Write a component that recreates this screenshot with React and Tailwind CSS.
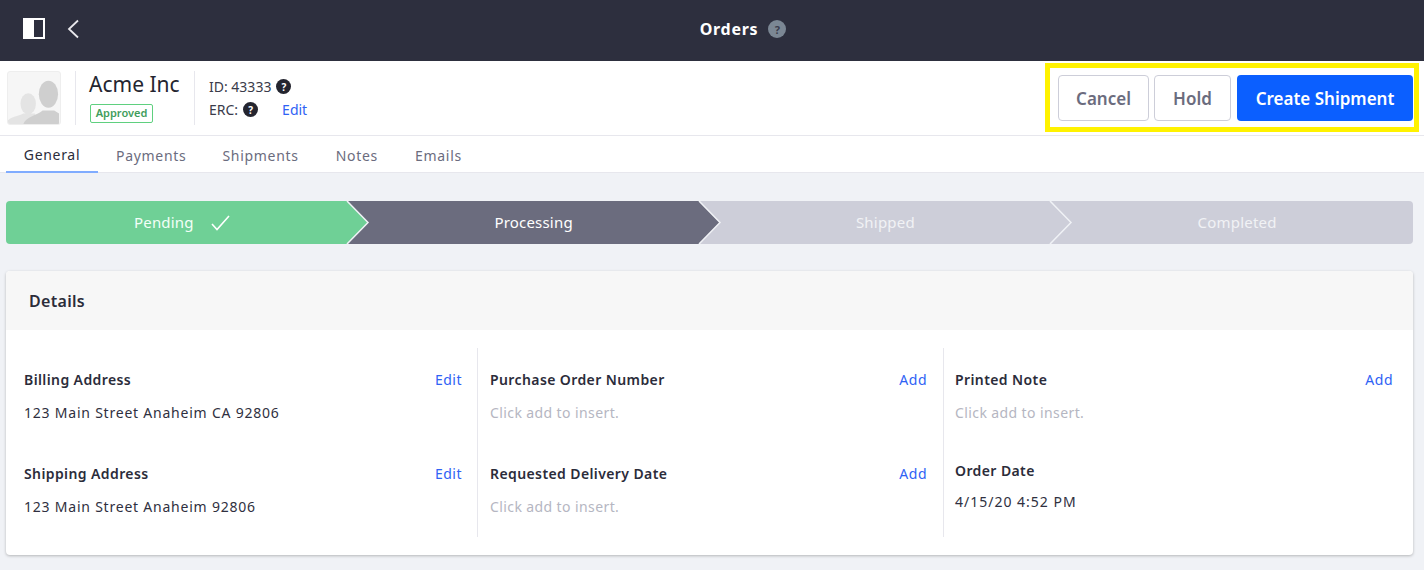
const font = { fontFamily: '"Noto Sans", sans-serif' };

function Help({ className = "bg-[#24252f] text-white w-[15px] h-[15px] text-[10px]" }) {
  return (
    <span className={`inline-flex items-center justify-center rounded-full font-bold leading-none tracking-normal ${className}`}>?</span>
  );
}

function Chevron({ own, next }) {
  return (
    <svg width="24" height="43" viewBox="0 0 24 43" className="absolute top-0 -right-[12px] z-10">
      <rect width="24" height="43" fill={next} />
      <polygon points="0,0 1,0 22,21.5 1,43 0,43" fill={own} />
      <polyline points="1,0 22,21.5 1,43" fill="none" stroke="#f0f2f6" strokeWidth="1.5" />
    </svg>
  );
}

function Step({ label, bg, next, check, rounded, textClass }) {
  return (
    <div className={`relative flex-1 h-full flex items-center justify-center ${rounded} ${textClass}`} style={{ backgroundColor: bg }}>
      <span className="text-[15px] tracking-[0.2px]">{label}</span>
      {check && (
        <svg width="19" height="16" viewBox="0 0 19 16" className="ml-[17px]" fill="none" stroke="#ffffff" strokeWidth="1.6">
          <path d="M1 9 L6 14.5 L18 1" />
        </svg>
      )}
      {next && <Chevron own={bg} next={next} />}
    </div>
  );
}

function Field({ label, action, value, muted, valueClass = "tracking-[0.4px]", className = "" }) {
  return (
    <div className={className}>
      <div className="flex items-center justify-between h-[22px]">
        <span className="text-[14px] font-semibold tracking-[0.4px] text-[#2b2c3a]">{label}</span>
        {action && <a className="text-[14px] tracking-[0.5px] text-[#2f62f5]">{action}</a>}
      </div>
      <div className={`mt-[12px] h-[22px] leading-[22px] text-[14px] ${valueClass} ${muted ? "text-[#b5b6c2]" : "text-[#2f3040]"}`}>{value}</div>
    </div>
  );
}

export default function App() {
  return (
    <div style={font} className="w-[1424px] h-[570px] overflow-hidden bg-[#f0f2f6] flex flex-col">
      <header className="relative h-[61px] shrink-0 bg-[#2d2f3e] flex items-center justify-center pl-[62px] pb-[3px]">
        <div className="absolute left-[23px] top-[18px] flex items-center gap-[22px]">
          <div className="w-[22px] h-[21px] border-2 border-white flex">
            <div className="w-[9px] bg-white" />
          </div>
          <svg width="12" height="20" viewBox="0 0 12 20" fill="none" stroke="#e8e8ec" strokeWidth="1.8">
            <path d="M11 1.5 L2 10 L11 18.5" />
          </svg>
        </div>
        <span className="text-[16px] font-bold tracking-[0.7px] text-white">Orders</span>
        <Help className="ml-[10px] w-[18px] h-[18px] text-[11px] bg-[#7b8794] text-[#3a3d4c]" />
      </header>

      <section className="h-[74px] shrink-0 bg-white flex items-center pl-[7px] pr-[5px]">
        <div className="w-[54px] h-[54px] rounded-[3px] bg-[#f6f6f6] border border-[#eeeeee] overflow-hidden">
          <svg viewBox="0 0 54 54" width="52" height="52">
            <ellipse cx="21" cy="33" rx="8" ry="11" fill="#e4e4e4" />
            <path d="M0 54 L0 50 C4 46 10 46 16 43 L28 43 L30 54 Z" fill="#e4e4e4" />
            <ellipse cx="42" cy="23" rx="10" ry="14" fill="#cfcfcf" />
            <path d="M16 54 C18 47 30 45 36 40 L48 40 L53 43 L53 54 Z" fill="#cfcfcf" />
          </svg>
        </div>
        <div className="ml-[14px] w-px h-[54px] bg-[#e7e7ed]" />
        <div className="ml-[13px] w-[105px] flex flex-col items-start">
          <span className="text-[21px] leading-[28px] -mt-[4px] text-[#24252f]">Acme Inc</span>
          <span className="ml-px mt-[6px] h-[19px] w-[63px] flex items-center justify-center border border-[#5fd07f] rounded-[2px] text-[11px] font-semibold text-[#3f9d5c]">Approved</span>
        </div>
        <div className="w-px h-[54px] bg-[#e7e7ed]" />
        <div className="ml-[14px] flex flex-col text-[14px] text-[#3a3b4a] leading-[23px]">
          <div className="flex items-center gap-[5px]">ID: 43333 <Help /></div>
          <div className="flex items-center">
            ERC: <Help className="bg-[#24252f] text-white w-[15px] h-[15px] text-[10px] ml-[5px]" />
            <a className="ml-[24px] text-[#2f62f5]">Edit</a>
          </div>
        </div>
        <div className="ml-auto self-start mt-[2px] h-[69px] w-[374px] border-[5px] border-[#fff200] flex items-center pl-[8px] gap-[5px]">
          <button className="w-[91px] h-[46px] pt-[3px] rounded-[4px] border border-[#cdced9] bg-white text-[17px] font-semibold text-[#6b6c7e]">Cancel</button>
          <button className="w-[77px] h-[46px] pt-[3px] rounded-[4px] border border-[#cdced9] bg-white text-[17px] font-semibold text-[#6b6c7e]">Hold</button>
          <button className="ml-px w-[176px] h-[46px] pt-[3px] rounded-[4px] bg-[#0b5fff] text-[17px] font-semibold text-white">Create Shipment</button>
        </div>
      </section>

      <nav className="h-[38px] shrink-0 bg-white border-y border-[#e7e7ed] pl-[6px] flex items-stretch text-[14px] tracking-[0.7px] text-[#6b6c7e]">
        <div className="w-[92px] pt-[2px] flex items-center justify-center text-[#2b2c3a] border-b-2 border-[#80acff] -mb-px">General</div>
        <div className="ml-[18px] pt-[2px] flex items-center">Payments</div>
        <div className="ml-[36px] pt-[2px] flex items-center">Shipments</div>
        <div className="ml-[37px] pt-[2px] flex items-center">Notes</div>
        <div className="ml-[37px] pt-[2px] flex items-center">Emails</div>
      </nav>

      <main className="px-[6px] pr-[11px] pt-[28px]">
        <div className="flex h-[43px]">
          <Step label="Pending" bg="#6fd096" next="#6b6c7e" check rounded="rounded-l-[4px]" textClass="text-[#f3fff8]" />
          <Step label="Processing" bg="#6b6c7e" next="#cdced9" rounded="" textClass="text-white" />
          <Step label="Shipped" bg="#cdced9" next="#cdced9" rounded="" textClass="text-[#f1f2f5]" />
          <Step label="Completed" bg="#cdced9" rounded="rounded-r-[4px]" textClass="text-[#f1f2f5]" />
        </div>

        <div className="mt-[27px] h-[284px] bg-white rounded-[4px] shadow-[0_1px_3px_rgba(0,0,0,0.25)] overflow-hidden">
          <div className="h-[59px] bg-[#f7f7f7] flex items-center pl-[23px] text-[16px] font-semibold tracking-[0.3px] text-[#2b2c3a]">Details</div>
          <div className="flex pt-[18px]">
            <div className="w-[472px] h-[189px] border-r border-[#e7e7ed] pl-[18px] pr-[15px] pt-[20px]">
              <Field label="Billing Address" action="Edit" value="123 Main Street Anaheim CA 92806" valueClass="tracking-[0.78px]" />
              <Field className="mt-[38px]" label="Shipping Address" action="Edit" value="123 Main Street Anaheim 92806" valueClass="tracking-[0.78px]" />
            </div>
            <div className="w-[466px] h-[189px] border-r border-[#e7e7ed] pl-[12px] pr-[16px] pt-[20px]">
              <Field label="Purchase Order Number" action="Add" value="Click add to insert." muted />
              <Field className="mt-[38px]" label="Requested Delivery Date" action="Add" value="Click add to insert." muted />
            </div>
            <div className="flex-1 h-[189px] pl-[11px] pr-[20px] pt-[20px]">
              <Field label="Printed Note" action="Add" value="Click add to insert." muted />
              <div className="mt-[36px] text-[14px] font-semibold tracking-[0.4px] text-[#2b2c3a] leading-[22px]">Order Date</div>
              <div className="mt-[9px] text-[14px] tracking-[1px] leading-[22px] text-[#2f3040]">4/15/20 4:52 PM</div>
            </div>
          </div>
        </div>
      </main>
    </div>
  );
}
